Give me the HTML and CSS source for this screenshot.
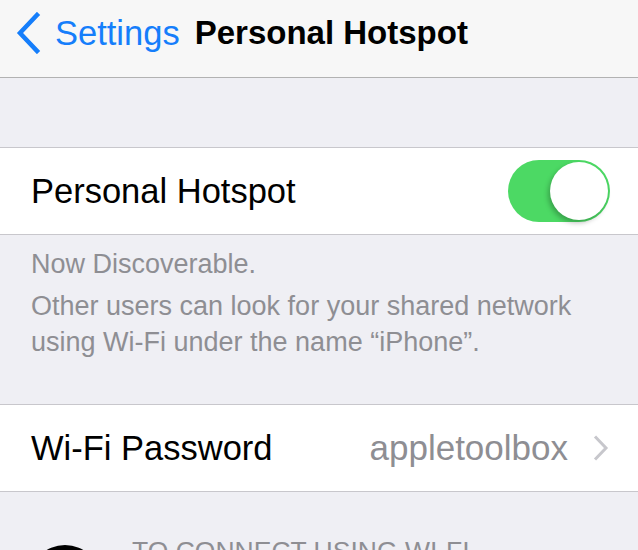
FILE: index.html
```html
<!DOCTYPE html>
<html lang="en">
<head>
    <meta charset="UTF-8">
    <meta name="viewport" content="width=device-width, initial-scale=1.0">
    <title>Personal Hotspot</title>
    <link rel="stylesheet" href="styles.css">
</head>
<body>
    <header class="nav-bar">
        <a class="back-btn" href="#">
            <svg class="back-icon" width="26" height="42" viewBox="0 0 26 42">
                <path d="M22 3 L5 21 L22 39" fill="none" stroke="#157efb" stroke-width="4.5" stroke-linecap="square"/>
            </svg>
            <span>Settings</span>
        </a>
        <h1 class="nav-title">Personal Hotspot</h1>
    </header>

    <div class="spacer"></div>

    <section class="group">
        <div class="cell">
            <span class="cell-label">Personal Hotspot</span>
            <div class="switch on"><div class="knob"></div></div>
        </div>
    </section>

    <div class="group-footer">
        <p class="footer-status">Now Discoverable.</p>
        <p class="footer-note">Other users can look for your shared network<br>using Wi-Fi under the name “iPhone”.</p>
    </div>

    <section class="group">
        <div class="cell">
            <span class="cell-label">Wi-Fi Password</span>
            <span class="cell-value">appletoolbox</span>
            <svg class="chevron" width="16" height="26" viewBox="0 0 16 26">
                <path d="M2 1.5 L13 13 L2 24.5" fill="none" stroke="#c7c7cc" stroke-width="3"/>
            </svg>
        </div>
    </section>

    <div class="instructions">
        <div class="step-icon"></div>
        <p class="step-title">TO CONNECT USING WI-FI</p>
    </div>
</body>
</html>
```

FILE: styles.css
```css
* {
    margin: 0;
    padding: 0;
    box-sizing: border-box;
}

body {
    font-family: 'Liberation Sans', Arial, sans-serif;
    background: #efeff4;
    width: 638px;
    height: 550px;
    overflow: hidden;
}

.nav-bar {
    height: 78px;
    background: #f7f7f7;
    border-bottom: 1px solid #b2b2b2;
    display: flex;
    align-items: center;
    padding-left: 15px;
    padding-bottom: 11px;
}

.back-btn {
    display: flex;
    align-items: center;
    color: #157efb;
    text-decoration: none;
    font-size: 34.5px;
}

.back-icon {
    margin-right: 14px;
}

.nav-title {
    margin-left: 15px;
    font-size: 33px;
    font-weight: bold;
    color: #000;
}

.spacer {
    height: 70px;
    border-bottom: 1px solid #c8c7cc;
}

.group {
    background: #fff;
    border-bottom: 1px solid #c8c7cc;
}

.cell {
    height: 86px;
    display: flex;
    align-items: center;
    padding: 0 28px 0 31px;
}

.cell-label {
    flex: 1;
    font-size: 34.5px;
    color: #000;
}

.cell-value {
    font-size: 35px;
    color: #8e8e93;
    margin-right: 25px;
}

.chevron {
    margin-right: 1px;
}

.switch {
    width: 102px;
    height: 62px;
    border-radius: 31px;
    background: #4cd964;
    display: flex;
    align-items: center;
    padding: 2px;
}

.switch.on {
    justify-content: flex-end;
}

.knob {
    width: 58px;
    height: 58px;
    border-radius: 50%;
    background: #fff;
    box-shadow: -2px 3px 5px rgba(0, 0, 0, 0.25);
}

.group-footer {
    padding: 11px 31px 44px;
    color: #8e8e93;
    font-size: 27px;
    line-height: 36px;
    border-bottom: 1px solid #c8c7cc;
    white-space: nowrap;
}

.footer-status {
    margin-bottom: 6px;
}

.instructions {
    display: flex;
    align-items: flex-start;
    padding: 44px 0 0 29px;
}

.step-icon {
    width: 72px;
    height: 72px;
    border-radius: 50%;
    background: #000;
    margin-top: 9px;
}

.step-title {
    margin-left: 31px;
    font-size: 26.5px;
    line-height: 30px;
    color: #8e8e93;
}
```
